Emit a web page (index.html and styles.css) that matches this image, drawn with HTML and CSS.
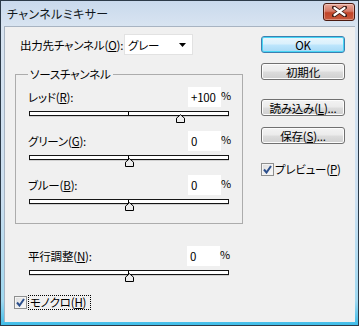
FILE: index.html
```html
<!DOCTYPE html>
<html lang="ja">
<head>
<meta charset="utf-8">
<title>チャンネルミキサー</title>
<link rel="stylesheet" href="styles.css">
</head>
<body>
<div class="window">
  <div class="titlebar">
    <span class="title">チャンネルミキサー</span>
    <div class="close">
      <svg width="15" height="11" viewBox="0 0 15 11"><path d="M2 1.5 L13 9.5 M13 1.5 L2 9.5" stroke="#3a1a14" stroke-width="4" stroke-linecap="round"/><path d="M2.5 2 L12.5 9 M12.5 2 L2.5 9" stroke="#fff" stroke-width="2.2" stroke-linecap="round"/></svg>
    </div>
  </div>
  <div class="client">
    <div class="main">
      <div class="out-row">
        <span class="label">出力先チャンネル(<u>O</u>):</span>
        <div class="select"><span>グレー</span><svg width="7" height="4" viewBox="0 0 7 4"><path d="M0 0H7L3.5 4Z" fill="#000"/></svg></div>
      </div>
      <fieldset class="group">
        <legend>ソースチャンネル</legend>
        <div class="ctrl">
          <div class="ctrl-row"><span class="label">レッド(<u>R</u>):</span><span class="input">+100</span><span class="pct">%</span></div>
          <div class="slider"><span class="tick"></span><svg class="thumb" style="left:146px" width="9" height="9" viewBox="0 0 9 9"><path d="M0.5 8.5V4.2L4.5 0.7L8.5 4.2V8.5Z" fill="#ececec" stroke="#000"/></svg></div>
        </div>
        <div class="ctrl">
          <div class="ctrl-row"><span class="label">グリーン(<u>G</u>):</span><span class="input">0</span><span class="pct">%</span></div>
          <div class="slider"><span class="tick"></span><svg class="thumb" style="left:95px" width="9" height="9" viewBox="0 0 9 9"><path d="M0.5 8.5V4.2L4.5 0.7L8.5 4.2V8.5Z" fill="#ececec" stroke="#000"/></svg></div>
        </div>
        <div class="ctrl">
          <div class="ctrl-row"><span class="label">ブルー(<u>B</u>):</span><span class="input">0</span><span class="pct">%</span></div>
          <div class="slider"><span class="tick"></span><svg class="thumb" style="left:95px" width="9" height="9" viewBox="0 0 9 9"><path d="M0.5 8.5V4.2L4.5 0.7L8.5 4.2V8.5Z" fill="#ececec" stroke="#000"/></svg></div>
        </div>
      </fieldset>
      <div class="ctrl const">
        <div class="ctrl-row"><span class="label">平行調整(<u>N</u>):</span><span class="input">0</span><span class="pct">%</span></div>
        <div class="slider"><span class="tick"></span><svg class="thumb" style="left:95px" width="9" height="9" viewBox="0 0 9 9"><path d="M0.5 8.5V4.2L4.5 0.7L8.5 4.2V8.5Z" fill="#ececec" stroke="#000"/></svg></div>
      </div>
      <div class="check mono">
        <span class="box"><svg width="9" height="9" viewBox="0 0 9 9"><path d="M1 4.5L3.5 7.5L8 1" fill="none" stroke="#2c4f8c" stroke-width="2"/></svg></span>
        <span class="focus">モノクロ(<u>H</u>)</span>
      </div>
    </div>
    <div class="side">
      <div class="btn default">OK</div>
      <div class="btn reset">初期化</div>
      <div class="btn load">読み込み(<u>L</u>)...</div>
      <div class="btn save">保存(<u>S</u>)...</div>
      <div class="check preview">
        <span class="box"><svg width="9" height="9" viewBox="0 0 9 9"><path d="M1 4.5L3.5 7.5L8 1" fill="none" stroke="#2c4f8c" stroke-width="2"/></svg></span>
        <span class="text">プレビュー(<u>P</u>)</span>
      </div>
    </div>
  </div>
</div>
</body>
</html>
```

FILE: styles.css
```css
* { box-sizing: border-box; }
html, body { margin: 0; padding: 0; }
body {
  width: 359px;
  height: 326px;
  overflow: hidden;
  font-family: "Noto Sans CJK JP", "Noto Sans", sans-serif;
  font-size: 11.5px;
  letter-spacing: -0.2px;
  font-feature-settings: "palt";
  color: #000;
  background: #fff;
  white-space: nowrap;
}
u { text-decoration: underline; text-underline-offset: 1px; }

.window {
  width: 359px;
  height: 326px;
  border: 1px solid #2c3a48;
  background: linear-gradient(to bottom, #c9d9ec 0px, #d8e4f1 25px, #cbdff0 200px, #9fd8f0 300px, #3fbde9 324px);
  display: flex;
  flex-direction: column;
}

.titlebar {
  height: 25px;
  flex: none;
  display: flex;
  align-items: center;
  justify-content: space-between;
  padding: 0 3px 0 6px;
}
.title {
  font-size: 12px;
  line-height: 14px;
  color: #101820;
  letter-spacing: 0.4px;
}
.close {
  width: 32px;
  height: 18px;
  margin-top: -4px;
  border: 1px solid #4b1a10;
  border-radius: 3px;
  background: linear-gradient(to bottom, #e9a99b 0%, #d57966 45%, #c24428 55%, #c85a3e 100%);
  box-shadow: inset 0 0 0 1px rgba(255,255,255,0.35);
  display: flex;
  align-items: center;
  justify-content: center;
}

.client {
  flex: 1;
  margin: 0 3px 3px 3px;
  background: #f0f0f0;
  border-top: 1px solid #a8b4c2;
  border-left: 1px solid #a8b4c2;
  display: flex;
}

.main {
  width: 245px;
  padding-top: 7px;
  display: flex;
  flex-direction: column;
}

.out-row {
  height: 21px;
  display: flex;
  align-items: center;
  padding-left: 15px;
}
.out-row .label { width: 104px; flex: none; }
.select {
  width: 69px;
  height: 21px;
  background: #fff;
  border: 1px solid #e2e2e2;
  display: flex;
  align-items: center;
  justify-content: space-between;
  padding: 0 6px 0 3px;
}

.group {
  margin: 12px 0 0 10px;
  width: 228px;
  border: 1px solid #acacac;
  padding: 6px 12px 19px 12px;
  min-width: 0;
}
.group legend {
  padding: 0 2px;
  line-height: 14px;
  margin-left: 0;
}

.ctrl { display: flex; flex-direction: column; }
.group .ctrl + .ctrl { margin-top: 15px; }

.ctrl-row {
  height: 20px;
  display: flex;
  align-items: center;
}
.ctrl-row .label { flex: 1; }
.input {
  width: 33px;
  height: 20px;
  background: #fff;
  padding: 0 3px;
  line-height: 20px;
}
.pct {
  width: 9px;
  text-align: right;
  font-size: 11px;
  align-self: flex-start;
  line-height: 16px;
}

.slider {
  position: relative;
  margin: 4px 0 0 1px;
  width: 200px;
  height: 5px;
  background: #fff;
  border: 1px solid #151515;
  box-shadow: 0 1px 0 #d0d0d0;
}
.tick {
  position: absolute;
  left: 98px;
  top: 0;
  width: 1px;
  height: 3px;
  background: #000;
}
.thumb {
  position: absolute;
  top: 2px;
  display: block;
}

.const {
  margin: 22px 0 0 23px;
  width: 201px;
}

.check {
  display: flex;
  align-items: center;
}
.box {
  width: 13px;
  height: 13px;
  border: 1px solid #8e8f8f;
  background: linear-gradient(135deg, #dcdcdc, #fbfbfb);
  box-shadow: inset 0 0 0 1px #f4f4f4;
  display: flex;
  align-items: center;
  justify-content: center;
  flex: none;
}
.mono {
  margin: 20px 0 0 9px;
}
.focus {
  margin-left: 1px;
  border: 1px dotted #000;
  padding: 0 4px 0 1px;
  line-height: 13px;
}

.side {
  margin-left: 11px;
  padding-top: 9px;
  display: flex;
  flex-direction: column;
  width: 84px;
}
.btn {
  width: 84px;
  height: 17px;
  border: 1px solid #707070;
  border-radius: 3px;
  background: linear-gradient(to bottom, #f3f3f3 0%, #ebebeb 48%, #dddddd 52%, #cfcfcf 100%);
  box-shadow: inset 0 0 0 1px #fcfcfc;
  display: flex;
  align-items: center;
  justify-content: center;
  line-height: 14px;
}
.btn.default {
  border-color: #3c7fb1;
  background: linear-gradient(to bottom, #eaf6fd 0%, #d9f0fc 48%, #bee6fd 52%, #a7d9f5 100%);
  box-shadow: inset 0 0 0 1px #48d6f4;
}
.btn.reset { margin-top: 10px; }
.btn.load { margin-top: 19px; }
.btn.save { margin-top: 11px; }
.preview { margin-top: 17px; }
.preview .text { margin-left: 1px; }
```
